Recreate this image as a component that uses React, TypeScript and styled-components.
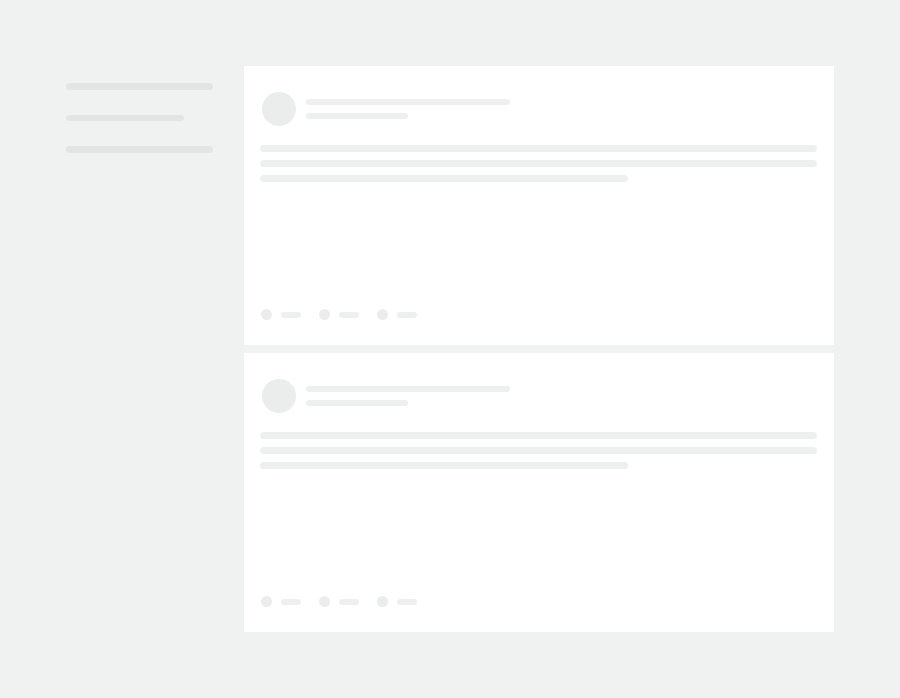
import React from "react";
import styled, { createGlobalStyle } from "styled-components";

const Global = createGlobalStyle`
  html, body { margin: 0; padding: 0; background: #f0f1f1; font-family: "Liberation Sans", Arial, sans-serif; }
  #root { min-height: 698px; }
`;

const Page = styled.div`
  display: flex;
  align-items: flex-start;
  gap: 31px;
  padding: 66px 0 0 66px;
  min-height: 698px;
  box-sizing: border-box;
`;

const Sidebar = styled.div`
  width: 147px;
  display: flex;
  flex-direction: column;
  gap: 25px;
  padding-top: 17px;
`;

const SideBar = styled.div<{ $w: number; $h: number }>`
  width: ${(p) => p.$w}px;
  height: ${(p) => p.$h}px;
  border-radius: 4px;
  background: #e3e5e5;
`;

const Feed = styled.div`
  width: 590px;
  display: flex;
  flex-direction: column;
  gap: 8px;
`;

const Card = styled.div`
  height: 279px;
  box-sizing: border-box;
  background: #ffffff;
  padding: 26px 17px 25px 16px;
  display: flex;
  flex-direction: column;
`;

const Header = styled.div`
  display: flex;
  align-items: flex-start;
  gap: 10px;
  padding-left: 2px;
`;

const Avatar = styled.div`
  width: 34px;
  height: 34px;
  border-radius: 50%;
  background: #ebecec;
  flex-shrink: 0;
`;

const HeaderLines = styled.div`
  display: flex;
  flex-direction: column;
  gap: 8px;
  padding-top: 7px;
`;

const Line = styled.div<{ $w: string; $h?: number }>`
  width: ${(p) => p.$w};
  height: ${(p) => p.$h ?? 6}px;
  border-radius: 4px;
  background: #eeefef;
`;

const Body = styled.div`
  display: flex;
  flex-direction: column;
  gap: 8px;
  margin-top: 19px;
`;

const Footer = styled.div`
  margin-top: auto;
  display: flex;
  align-items: center;
  gap: 18px;
  padding-left: 1px;
`;

const Stat = styled.div`
  display: flex;
  align-items: center;
  gap: 9px;
`;

const Dot = styled.div`
  width: 11px;
  height: 11px;
  border-radius: 50%;
  background: #ebecec;
`;

const Dash = styled.div`
  width: 20px;
  height: 6px;
  border-radius: 3px;
  background: #eeefef;
`;

const PostSkeleton: React.FC = () => (
  <Card>
    <Header>
      <Avatar />
      <HeaderLines>
        <Line $w="204px" />
        <Line $w="102px" />
      </HeaderLines>
    </Header>
    <Body>
      <Line $w="100%" $h={7} />
      <Line $w="100%" $h={7} />
      <Line $w="368px" $h={7} />
    </Body>
    <Footer>
      {[0, 1, 2].map((i) => (
        <Stat key={i}>
          <Dot />
          <Dash />
        </Stat>
      ))}
    </Footer>
  </Card>
);

export default function App() {
  return (
    <>
      <Global />
      <Page>
        <Sidebar>
          <SideBar $w={147} $h={7} />
          <SideBar $w={118} $h={6} />
          <SideBar $w={147} $h={7} />
        </Sidebar>
        <Feed>
          <PostSkeleton />
          <PostSkeleton />
        </Feed>
      </Page>
    </>
  );
}
